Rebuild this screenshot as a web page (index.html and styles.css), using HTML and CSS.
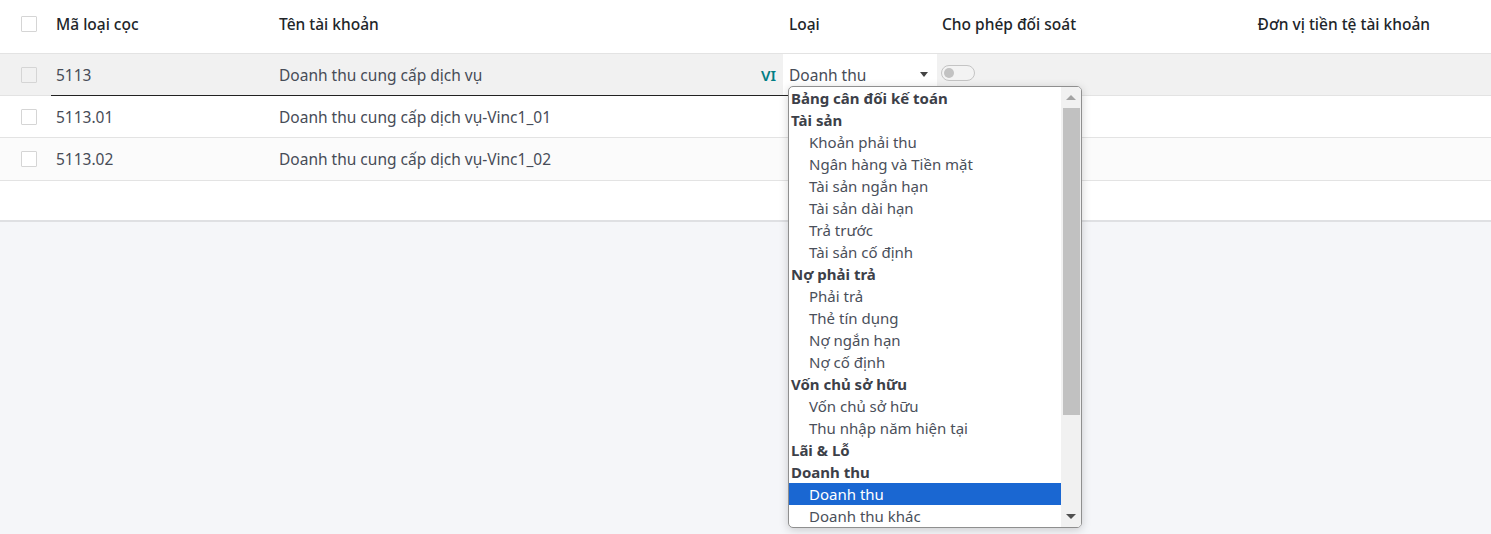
FILE: index.html
```html
<!DOCTYPE html>
<html lang="vi">
<head>
    <meta charset="UTF-8">
    <title>Hệ thống tài khoản</title>
    <link rel="stylesheet" href="styles.css">
</head>
<body>
    <div class="list">
        <div class="row head">
            <div class="cell check"><span class="box"></span></div>
            <div class="cell code">Mã loại cọc</div>
            <div class="cell name">Tên tài khoản</div>
            <div class="cell type">Loại</div>
            <div class="cell reconcile">Cho phép đối soát</div>
            <div class="cell currency">Đơn vị tiền tệ tài khoản</div>
            <div class="cell extra"></div>
        </div>

        <div class="row editing">
            <div class="cell check"><span class="box"></span></div>
            <div class="cell code"><span class="input">5113</span></div>
            <div class="cell name"><span class="input">Doanh thu cung cấp dịch vụ<span class="lang">VI</span></span></div>
            <div class="cell type">
                <div class="select">
                    <span>Doanh thu</span>
                    <span class="caret"></span>
                </div>
                <div class="dropdown">
                    <ul class="options">
                        <li class="group">Bảng cân đối kế toán</li>
                        <li class="group">Tài sản</li>
                        <li>Khoản phải thu</li>
                        <li>Ngân hàng và Tiền mặt</li>
                        <li>Tài sản ngắn hạn</li>
                        <li>Tài sản dài hạn</li>
                        <li>Trả trước</li>
                        <li>Tài sản cố định</li>
                        <li class="group">Nợ phải trả</li>
                        <li>Phải trả</li>
                        <li>Thẻ tín dụng</li>
                        <li>Nợ ngắn hạn</li>
                        <li>Nợ cố định</li>
                        <li class="group">Vốn chủ sở hữu</li>
                        <li>Vốn chủ sở hữu</li>
                        <li>Thu nhập năm hiện tại</li>
                        <li class="group">Lãi &amp; Lỗ</li>
                        <li class="group">Doanh thu</li>
                        <li class="selected">Doanh thu</li>
                        <li>Doanh thu khác</li>
                    </ul>
                    <div class="scrollbar">
                        <span class="arrow up"></span>
                        <span class="thumb"></span>
                        <span class="arrow down"></span>
                    </div>
                </div>
            </div>
            <div class="cell reconcile"><span class="toggle"></span></div>
            <div class="cell currency"></div>
            <div class="cell extra"></div>
        </div>

        <div class="row">
            <div class="cell check"><span class="box"></span></div>
            <div class="cell code">5113.01</div>
            <div class="cell name">Doanh thu cung cấp dịch vụ-Vinc1_01</div>
            <div class="cell type"></div>
            <div class="cell reconcile"></div>
            <div class="cell currency"></div>
            <div class="cell extra"></div>
        </div>

        <div class="row alt">
            <div class="cell check"><span class="box"></span></div>
            <div class="cell code">5113.02</div>
            <div class="cell name">Doanh thu cung cấp dịch vụ-Vinc1_02</div>
            <div class="cell type"></div>
            <div class="cell reconcile"></div>
            <div class="cell currency"></div>
            <div class="cell extra"></div>
        </div>

        <div class="filler"></div>
    </div>
</body>
</html>
```

FILE: styles.css
```css
html, body {
    min-height: 100vh;
}

body {
    margin: 0;
    background-color: #f5f6f9;
    font-family: 'Noto Sans', 'Open Sans', sans-serif;
    font-size: 15.5px;
    color: #474c57;
}

.list {
    background-color: #fff;
    border-bottom: 2px solid #dfe0e3;
}

.row {
    display: grid;
    grid-template-columns: 48px 223px 512px 154px 313px 180px 1fr;
    height: 42px;
    border-bottom: 1px solid #e3e3e3;
    box-sizing: border-box;
}

.row.head {
    height: 54px;
    padding-bottom: 6px;
    color: #212529;
    font-weight: 500;
}

.row.editing {
    background-color: #f1f1f1;
}

.row.alt {
    height: 43px;
    background-color: #fbfbfb;
}

.cell {
    display: flex;
    align-items: center;
    min-width: 0;
    white-space: nowrap;
}

.check {
    justify-content: center;
    padding-left: 10px;
    box-sizing: border-box;
}

.box {
    width: 14px;
    height: 14px;
    border: 1px solid #d5d5d5;
    background-color: #fff;
    border-radius: 1px;
}

.editing .box {
    background-color: #f1f1f1;
}

.code, .name {
    padding-left: 8px;
}

.head .type {
    padding-left: 6px;
}

.head .reconcile {
    padding-left: 5px;
}

.currency {
    justify-content: flex-end;
}

/* edit row inputs */
.editing .code,
.editing .name {
    align-items: stretch;
    padding-left: 0;
}

.editing .code {
    padding-left: 3px;
}

.editing .code .input {
    padding-left: 5px;
}

.editing .name .input {
    padding-left: 8px;
}

.input {
    flex: 1;
    display: flex;
    align-items: center;
    border-bottom: 1px solid #222;
    margin-bottom: -1px;
}

.lang {
    margin-left: auto;
    margin-right: 7px;
    color: #017e84;
    font-weight: 600;
    font-size: 15px;
}

.editing .type {
    position: relative;
    background-color: #fff;
    align-items: stretch;
}

.select {
    flex: 1;
    display: flex;
    align-items: center;
    justify-content: space-between;
    padding: 0 6px;
    border-bottom: 1px solid #222;
    margin-bottom: -1px;
}

.caret {
    width: 0;
    height: 0;
    border-left: 4px solid transparent;
    border-right: 4px solid transparent;
    border-top: 5px solid #444;
    margin-right: 3px;
}

.toggle {
    position: relative;
    width: 32px;
    height: 14px;
    margin-left: 4px;
    margin-top: -3px;
    border: 1px solid #c4c4c4;
    border-radius: 8px;
    background-color: #f3f3f3;
}

.toggle::after {
    content: "";
    position: absolute;
    left: 2px;
    top: 2px;
    width: 10px;
    height: 10px;
    border-radius: 50%;
    background-color: #c2c2c2;
}

.filler {
    height: 39px;
}

/* open select list */
.dropdown {
    position: absolute;
    left: 5px;
    top: 32px;
    z-index: 5;
    display: flex;
    width: 294px;
    height: 442px;
    box-sizing: border-box;
    border: 1px solid #8f8f8f;
    border-radius: 5px;
    background-color: #fff;
    box-shadow: 0 2px 10px rgba(0, 0, 0, 0.18);
    overflow: hidden;
    font-size: 15px;
}

.options {
    flex: 1;
    list-style: none;
    margin: 0;
    padding: 0;
    color: #4a4f5a;
}

.options li {
    height: 22px;
    line-height: 22px;
    padding-left: 20px;
}

.options li.group {
    padding-left: 2px;
    font-weight: 700;
    color: #3c4048;
}

.options li.selected {
    background-color: #1a67d2;
    color: #fff;
}

.scrollbar {
    width: 20px;
    display: flex;
    flex-direction: column;
    align-items: center;
    background-color: #f1f1f1;
}

.arrow {
    width: 0;
    height: 0;
    border-left: 5px solid transparent;
    border-right: 5px solid transparent;
    margin: 8px 0;
}

.arrow.up {
    border-bottom: 5px solid #a3a3a3;
}

.arrow.down {
    border-top: 5px solid #505050;
    margin-top: auto;
}

.thumb {
    width: 17px;
    height: 307px;
    background-color: #c1c1c1;
}
```
